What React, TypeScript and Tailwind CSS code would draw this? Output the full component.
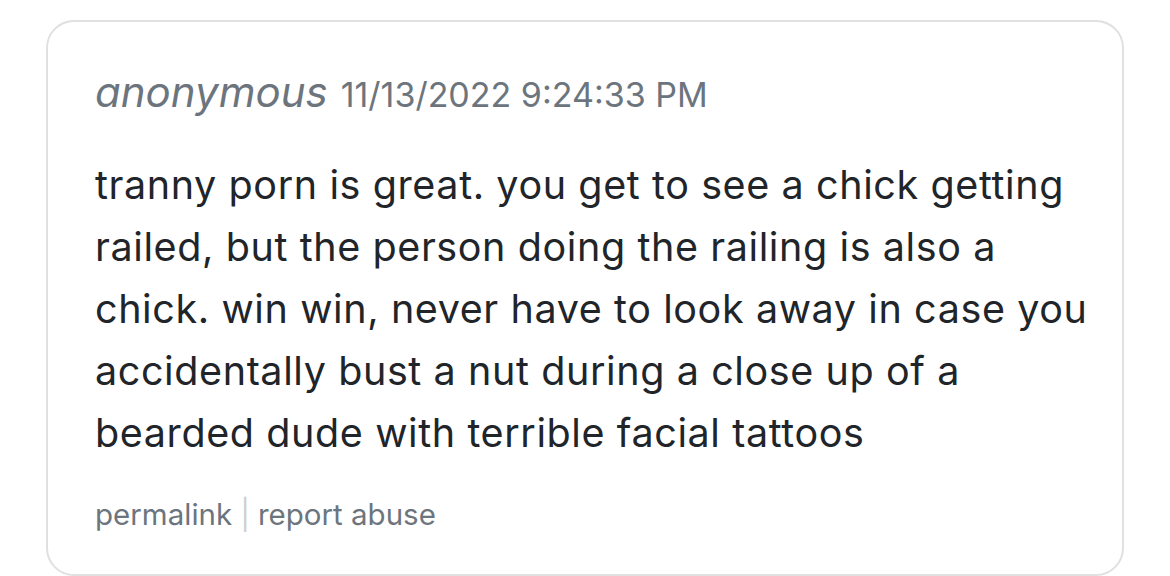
export default function App() {
  return (
    <div className="w-[1170px] h-[576px] bg-white pt-[20px] pl-[46px] pr-[46px] overflow-hidden" style={{ fontFamily: 'Inter, "Helvetica Neue", Arial, sans-serif' }}>
      <div className="h-[556px] border-2 border-[#e0e0e0] rounded-[28px] pl-[47px] pr-[30px] pt-[45px]">
        <div className="flex items-baseline gap-[13px] text-[#6c757d] leading-[50px]">
          <span className="italic text-[42px]">anonymous</span>
          <span className="text-[34px]">11/13/2022 9:24:33 PM</span>
        </div>
        <p className="mt-[34px] text-[39.5px] leading-[62px] tracking-[0.6px] text-[#212529]">
          tranny porn is great. you get to see a chick getting railed, but the person doing the railing is also a chick. win win, never have to look away in case you accidentally bust a nut during a close up of a bearded dude with terrible facial tattoos
        </p>
        <div className="mt-[32px] text-[29.5px] leading-[36px] text-[#6c757d] flex items-center">
          <span>permalink</span>
          <span className="mx-[8px] text-[#d0d0d0]">|</span>
          <span>report abuse</span>
        </div>
      </div>
    </div>
  );
}
